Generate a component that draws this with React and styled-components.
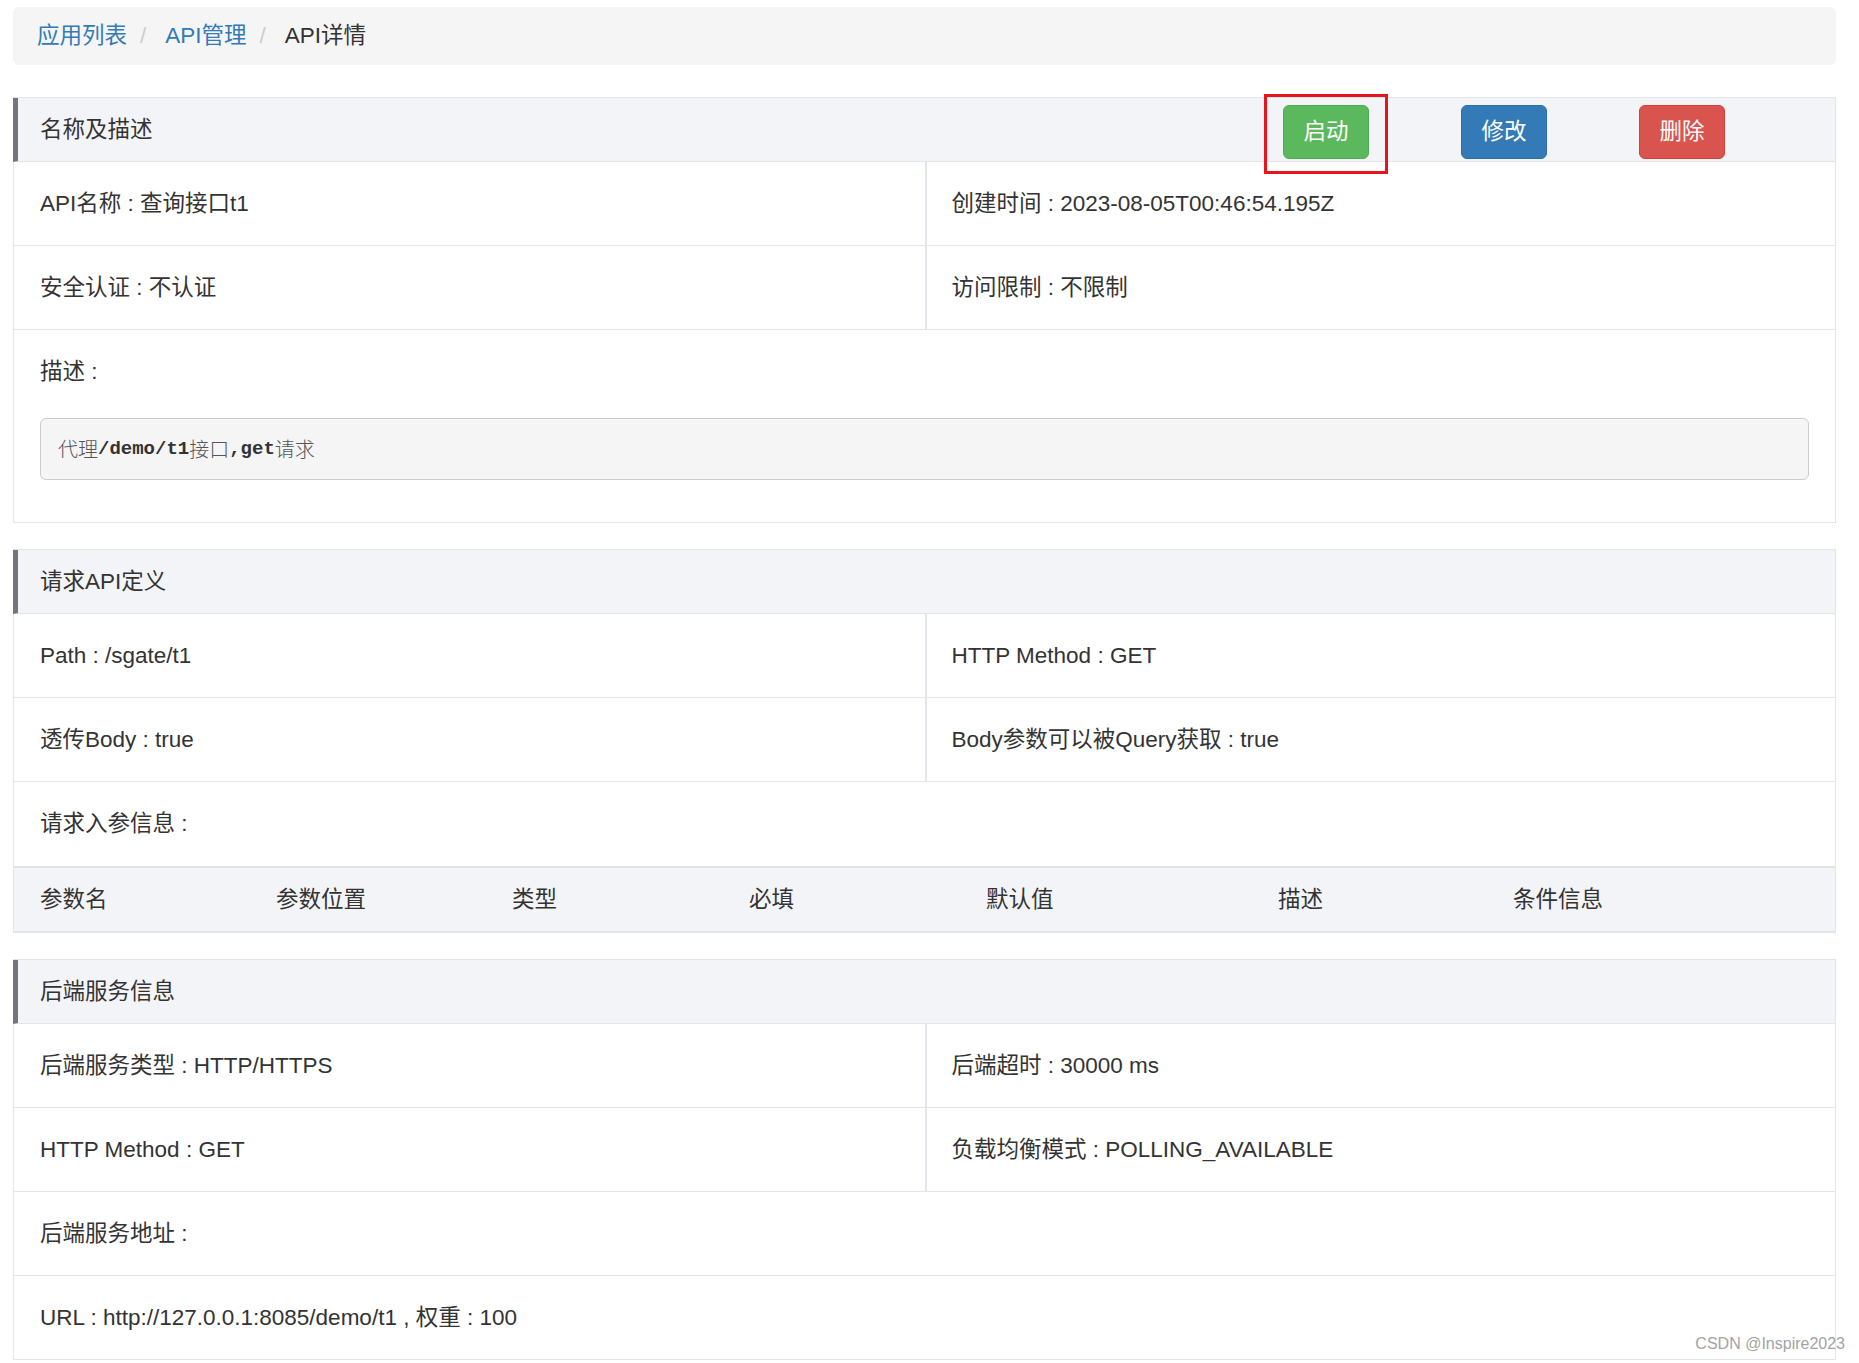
import React from "react";
import styled, { createGlobalStyle } from "styled-components";

const Global = createGlobalStyle`
  html, body { margin: 0; padding: 0; background: #fff; }
  body {
    font-family: "Liberation Sans", Arial, "Noto Sans CJK SC", sans-serif;
    font-size: 22.5px;
    color: #333;
  }
  * { box-sizing: border-box; }
`;

const Page = styled.div`
  position: relative;
  padding: 7px 23px 4px 13px;
  min-height: 1363px;
`;

const Breadcrumb = styled.nav`
  display: flex;
  align-items: center;
  height: 58px;
  padding: 0 24px;
  background: #f5f5f5;
  border-radius: 6px;
  margin-bottom: 32px;
  line-height: 32px;
`;

const Crumb = styled.span`
  color: ${(p) => (p.$active ? "#333" : "#337ab7")};
`;

const Sep = styled.span`
  color: #ccc;
  margin: 0 19px 0 13px;
`;

const Panel = styled.section`
  border: 1px solid #e2e6ea;
  margin-bottom: 26px;
  display: flex;
  flex-direction: column;
`;

const PanelHeader = styled.header`
  display: flex;
  align-items: center;
  height: 64px;
  margin-left: -1px;
  padding-left: 22px;
  background: #f3f4f7;
  border-left: 5px solid #77737f;
  border-bottom: 1px solid #e2e6ea;
  line-height: 32px;
`;

const Actions = styled.div`
  margin-left: auto;
  display: flex;
  gap: 92px;
  padding-right: 110px;
  padding-top: 5px;
`;

const Highlight = styled.div`
  position: relative;
  display: flex;
  &::after {
    content: "";
    position: absolute;
    top: -11px;
    bottom: -15px;
    left: -19px;
    right: -19px;
    border: 3px solid #e8141d;
    pointer-events: none;
  }
`;

const colors = {
  success: ["#5cb85c", "#4cae4c"],
  primary: ["#337ab7", "#2e6da4"],
  danger: ["#d9534f", "#d43f3a"],
};

const Button = styled.button`
  width: 86px;
  height: 54px;
  padding: 0;
  border-radius: 6px;
  border: 1px solid ${(p) => colors[p.$kind][1]};
  background: ${(p) => colors[p.$kind][0]};
  color: #fff;
  font-family: inherit;
  font-size: 22.5px;
  line-height: 32px;
  cursor: pointer;
`;

const Row = styled.div`
  display: grid;
  grid-template-columns: 1fr 1fr;
  border-bottom: 1px solid #e2e6ea;
`;

const Cell = styled.div`
  display: flex;
  align-items: center;
  height: 83px;
  padding: 0 26px;
  line-height: 32px;
  white-space: nowrap;
  & + & {
    border-left: 2px solid #e2e6ea;
    padding-left: 25px;
  }
`;

const FullCell = styled.div`
  display: flex;
  flex-direction: column;
  padding: ${(p) => (p.$tall ? "26px 26px 42px 26px" : "0 26px")};
  height: ${(p) => (p.$tall ? "auto" : p.$h || "84px")};
  justify-content: center;
  line-height: 32px;
  border-bottom: ${(p) => (p.$last ? "none" : "1px solid #e2e6ea")};
`;

const Pre = styled.div`
  margin-top: 30px;
  height: 62px;
  display: flex;
  align-items: center;
  padding: 0 17px;
  background: #f5f5f5;
  border: 1px solid #ccc;
  border-radius: 6px;
  color: #333;
`;

const Mono = styled.span`
  font-family: "Liberation Mono", "DejaVu Sans Mono", monospace;
  font-size: 19px;
  font-weight: bold;
  color: #333;
`;

const CjkSerif = styled.span`
  font-family: "Noto Sans CJK SC", sans-serif;
  font-size: 20px;
  font-weight: 300;
  color: #555;
`;

const TableHead = styled.div`
  display: grid;
  grid-template-columns: 236px 236px 237px 237px 292px 235px 1fr;
  height: 66px;
  align-items: center;
  background: #f3f4f7;
  border-top: 2px solid #e0e4e8;
  border-bottom: 1px solid #e0e4e8;
  margin-top: -1px;
  line-height: 32px;
`;

const Th = styled.div`
  padding-left: 26px;
`;

const Watermark = styled.div`
  position: absolute;
  right: 14px;
  top: 1335px;
  font-family: "Liberation Sans", Arial, sans-serif;
  font-size: 16px;
  color: #a3a3a3;
`;

export default function App() {
  return (
    <>
      <Global />
      <Page>
        <Breadcrumb>
          <Crumb>应用列表</Crumb>
          <Sep>/</Sep>
          <Crumb>API管理</Crumb>
          <Sep>/</Sep>
          <Crumb $active>API详情</Crumb>
        </Breadcrumb>

        <Panel>
          <PanelHeader>
            名称及描述
            <Actions>
              <Highlight>
                <Button $kind="success">启动</Button>
              </Highlight>
              <Button $kind="primary">修改</Button>
              <Button $kind="danger">删除</Button>
            </Actions>
          </PanelHeader>
          <Row>
            <Cell>API名称 : 查询接口t1</Cell>
            <Cell>创建时间 : 2023-08-05T00:46:54.195Z</Cell>
          </Row>
          <Row>
            <Cell>安全认证 : 不认证</Cell>
            <Cell>访问限制 : 不限制</Cell>
          </Row>
          <FullCell $tall $last>
            <div>描述 :</div>
            <Pre>
              <CjkSerif>代理</CjkSerif>
              <Mono>/demo/t1</Mono>
              <CjkSerif>接口</CjkSerif>
              <Mono>,get</Mono>
              <CjkSerif>请求</CjkSerif>
            </Pre>
          </FullCell>
        </Panel>

        <Panel>
          <PanelHeader>请求API定义</PanelHeader>
          <Row>
            <Cell>Path : /sgate/t1</Cell>
            <Cell>HTTP Method : GET</Cell>
          </Row>
          <Row>
            <Cell>透传Body : true</Cell>
            <Cell>Body参数可以被Query获取 : true</Cell>
          </Row>
          <FullCell $h="85px">请求入参信息 :</FullCell>
          <TableHead>
            <Th>参数名</Th>
            <Th>参数位置</Th>
            <Th>类型</Th>
            <Th>必填</Th>
            <Th>默认值</Th>
            <Th>描述</Th>
            <Th>条件信息</Th>
          </TableHead>
        </Panel>

        <Panel>
          <PanelHeader>后端服务信息</PanelHeader>
          <Row>
            <Cell>后端服务类型 : HTTP/HTTPS</Cell>
            <Cell>后端超时 : 30000 ms</Cell>
          </Row>
          <Row>
            <Cell>HTTP Method : GET</Cell>
            <Cell>负载均衡模式 : POLLING_AVAILABLE</Cell>
          </Row>
          <FullCell $h="84px">后端服务地址 :</FullCell>
          <FullCell $last $h="83px">URL : http://127.0.0.1:8085/demo/t1 , 权重 : 100</FullCell>
        </Panel>
        <Watermark>CSDN @Inspire2023</Watermark>
      </Page>
    </>
  );
}
